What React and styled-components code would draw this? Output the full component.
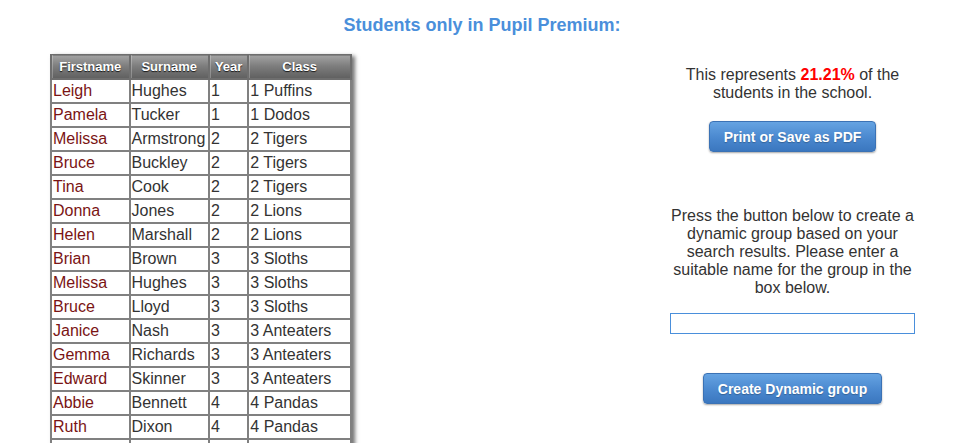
import React from "react";
import styled, { createGlobalStyle } from "styled-components";

const Global = createGlobalStyle`
  html, body { margin: 0; padding: 0; background: #fff; }
  body { font-family: Arial, "Liberation Sans", sans-serif; overflow: hidden; }
`;

const Page = styled.div`
  width: 964px;
  height: 443px;
  overflow: hidden;
`;

const Title = styled.h2`
  margin: 0;
  padding-top: 14px;
  height: 40px;
  box-sizing: border-box;
  text-align: center;
  font-size: 18px;
  line-height: 22px;
  font-weight: bold;
  color: #4a8fdb;
`;

const Columns = styled.div`
  display: flex;
  justify-content: space-between;
  align-items: flex-start;
  padding: 14px 49px 0 50px;
`;

const Table = styled.table`
  border-collapse: collapse;
  table-layout: fixed;
  width: 302px;
  box-shadow: 3px 2px 4px rgba(0, 0, 0, 0.55);
  font-size: 16px;
`;

const Th = styled.th`
  height: 23px;
  padding: 0;
  border: 2px solid #6e6e6e;
  border-top-width: 1px;
  background: linear-gradient(#a2a2a2 0%, #7e7e7e 45%, #5f5f5f 100%);
  color: #fff;
  font-size: 13px;
  font-weight: bold;
  text-shadow: 0 1px 1px rgba(0, 0, 0, 0.8);
  text-align: center;
  box-shadow: inset 1px 0 0 rgba(255, 255, 255, 0.25);
`;

const Td = styled.td`
  height: 22px;
  padding: 0 0 0 1px;
  border: 2px solid #808080;
  line-height: 20px;
  color: ${(p) => (p.$name ? "#7a1414" : "#333")};
  white-space: nowrap;
  overflow: hidden;
  background: #fff;
`;

const Side = styled.div`
  width: 245px;
  display: flex;
  flex-direction: column;
  align-items: center;
  text-align: center;
  color: #333;
  font-size: 16px;
  line-height: 18px;
`;

const Para = styled.p`
  margin: ${(p) => p.$m || "0"};
`;

const Red = styled.span`
  color: #ff0000;
  font-weight: bold;
`;

const Button = styled.button`
  height: 31px;
  padding: 0 14px;
  border: 1px solid #3b72b5;
  border-radius: 4px;
  background: linear-gradient(#65a3e2 0%, #4a88cf 55%, #3b77bf 100%);
  color: #fff;
  font-family: Arial, "Liberation Sans", sans-serif;
  font-size: 14px;
  font-weight: bold;
  text-shadow: 0 1px 1px rgba(0, 0, 0, 0.25);
  box-shadow: 0 1px 2px rgba(0, 0, 0, 0.35);
  margin: ${(p) => p.$m || "0"};
  cursor: pointer;
`;

const Input = styled.input`
  box-sizing: border-box;
  width: 245px;
  height: 21px;
  margin-top: 16px;
  border: 1px solid #4a8fdb;
  outline: none;
  background: #fff;
`;

const rows = [
  ["Leigh", "Hughes", "1", "1 Puffins"],
  ["Pamela", "Tucker", "1", "1 Dodos"],
  ["Melissa", "Armstrong", "2", "2 Tigers"],
  ["Bruce", "Buckley", "2", "2 Tigers"],
  ["Tina", "Cook", "2", "2 Tigers"],
  ["Donna", "Jones", "2", "2 Lions"],
  ["Helen", "Marshall", "2", "2 Lions"],
  ["Brian", "Brown", "3", "3 Sloths"],
  ["Melissa", "Hughes", "3", "3 Sloths"],
  ["Bruce", "Lloyd", "3", "3 Sloths"],
  ["Janice", "Nash", "3", "3 Anteaters"],
  ["Gemma", "Richards", "3", "3 Anteaters"],
  ["Edward", "Skinner", "3", "3 Anteaters"],
  ["Abbie", "Bennett", "4", "4 Pandas"],
  ["Ruth", "Dixon", "4", "4 Pandas"],
  ["Lucy", "Evans", "4", "4 Pandas"],
  ["Sam", "Green", "4", "4 Pandas"],
];

export default function App() {
  return (
    <Page>
      <Global />
      <Title>Students only in Pupil Premium:</Title>
      <Columns>
        <Table>
          <colgroup>
            <col style={{ width: 78 }} />
            <col style={{ width: 79 }} />
            <col style={{ width: 39 }} />
            <col style={{ width: 102 }} />
          </colgroup>
          <thead>
            <tr>
              <Th>Firstname</Th>
              <Th>Surname</Th>
              <Th>Year</Th>
              <Th>Class</Th>
            </tr>
          </thead>
          <tbody>
            {rows.map((r, i) => (
              <tr key={i}>
                <Td $name>{r[0]}</Td>
                <Td>{r[1]}</Td>
                <Td>{r[2]}</Td>
                <Td>{r[3]}</Td>
              </tr>
            ))}
          </tbody>
        </Table>
        <Side>
          <Para $m="12px 0 0">
            This represents <Red>21.21%</Red> of the students in the school.
          </Para>
          <Button $m="19px 0 0">Print or Save as PDF</Button>
          <Para $m="55px 0 0">
            Press the button below to create a dynamic group based on your
            search results. Please enter a suitable name for the group in the
            box below.
          </Para>
          <Input type="text" />
          <Button $m="39px 0 0">Create Dynamic group</Button>
        </Side>
      </Columns>
    </Page>
  );
}
